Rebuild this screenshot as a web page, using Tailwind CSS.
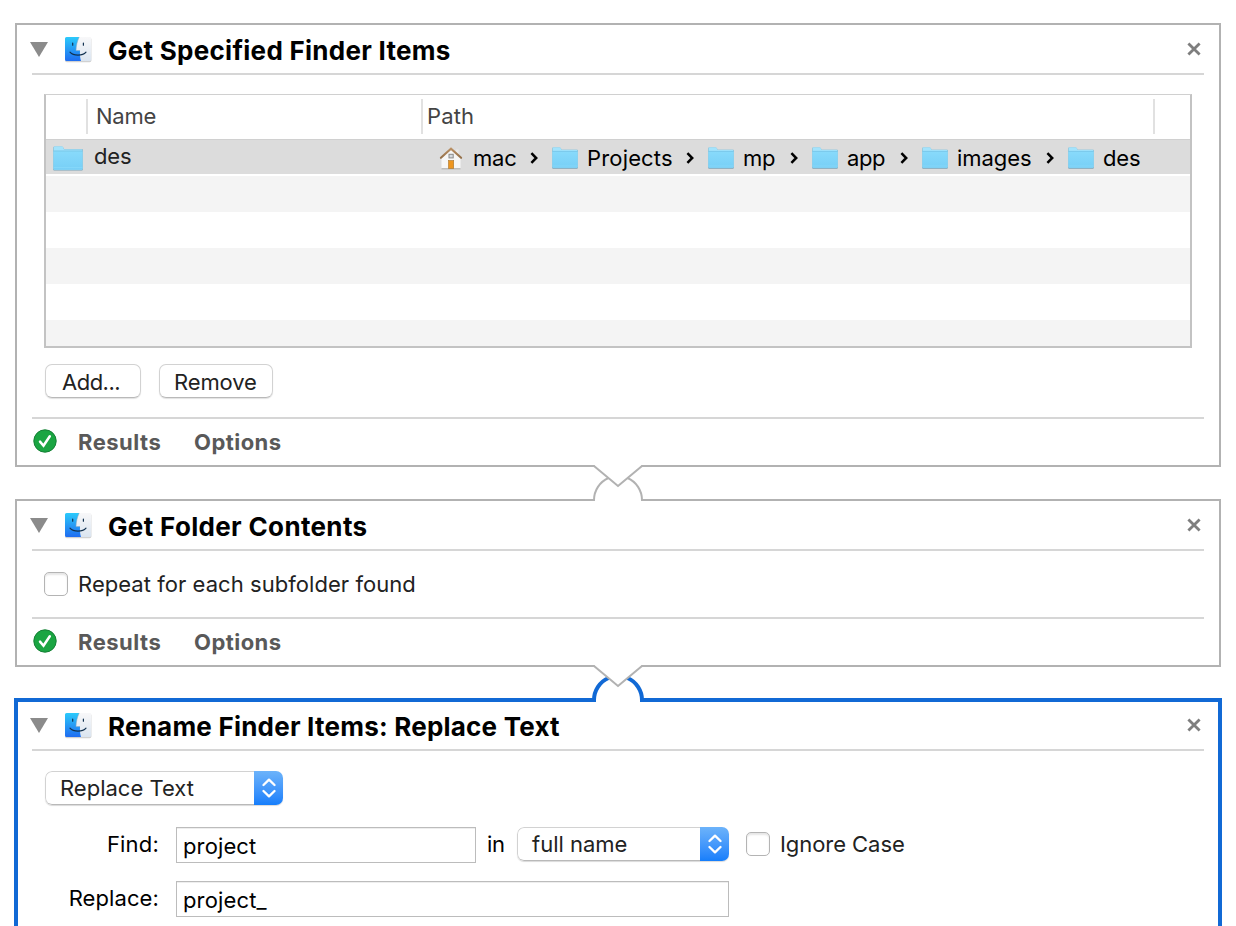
<!DOCTYPE html>
<html lang="en">
<head>
<meta charset="utf-8">
<title>Workflow</title>
<script src="https://cdn.jsdelivr.net/npm/@tailwindcss/browser@4"></script>
</head>
<body class="w-[1236px] h-[926px] overflow-hidden bg-white text-[22px] leading-[26px] text-[#222] font-['Inter','Liberation_Sans',sans-serif] whitespace-nowrap">
<svg width="0" height="0" class="absolute">
  <defs>
    <linearGradient id="fb" x1="0" y1="0" x2="0" y2="1"><stop offset="0" stop-color="#2bcafb"/><stop offset="1" stop-color="#1f6df0"/></linearGradient>
    <linearGradient id="fw" x1="0" y1="0" x2="0" y2="1"><stop offset="0" stop-color="#f8f8f9"/><stop offset="1" stop-color="#dbe5f0"/></linearGradient>
    <linearGradient id="fo" x1="0" y1="0" x2="0" y2="1"><stop offset="0" stop-color="#88dafb"/><stop offset="1" stop-color="#77cff6"/></linearGradient>
    <linearGradient id="roof" x1="0" y1="0" x2="0" y2="1"><stop offset="0" stop-color="#b98f63"/><stop offset="1" stop-color="#94704a"/></linearGradient>
  </defs>
  <symbol id="finder" viewBox="0 0 28 27">
    <rect x="1" y="1.6" width="26.4" height="24.600" rx="1.8" fill="#000" opacity=".18"/>
    <rect x="1" y="1" width="26.200" height="24" rx="1.6" fill="url(#fw)"/>
    <path d="M2.6 1H15.2C13.2 5.4 12.2 9.6 12 14.6H16C15.8 18 16 21.8 17 25H2.6A1.6 1.6 0 0 1 1 23.400V2.6A1.6 1.6 0 0 1 2.600 1Z" fill="url(#fb)"/>
    <path d="M15.200 1C13.200 5.400 12.200 9.600 12 14.600H16" fill="none" stroke="#8da9bd" stroke-width=".5"/>
    <path d="M8.700 7V9.200M19.400 7V9.200" stroke="#123250" stroke-width="1.200" stroke-linecap="round"/>
    <path d="M6 16.200C9.500 20.200 18.500 20.200 22 16.200" fill="none" stroke="#123250" stroke-width="1.200" stroke-linecap="round"/>
  </symbol>
  <symbol id="folder" viewBox="0 0 30 25" preserveAspectRatio="none">
    <path d="M0.200 2Q.2.500 1.500.500H8.500Q9.600.500 10.200 1.500L11 3H29Q29.800 3 29.800 4V23.500Q29.800 24.600 28.800 24.600H1.200Q.2 24.600.2 23.500Z" fill="#5f95af" opacity=".8"/>
    <path d="M0.500 1.800Q.5.300 1.700.300H8.500Q9.600.300 10.200 1.300L11 3.200H28.700Q29.500 3.200 29.500 4V22.800Q29.500 23.700 28.600 23.700H1.400Q.5 23.700.5 22.800Z" fill="#a3e3fc"/>
    <path d="M.5 5.200H29.500V22.800Q29.500 23.700 28.600 23.700H1.400Q.5 23.700.5 22.800Z" fill="url(#fo)"/>
    <path d="M.5 5H29.500" stroke="#6dc0e4" stroke-width=".8"/>
    <path d="M.6 21.600H29.400" stroke="#8ddbfa" stroke-width=".7"/>
  </symbol>
  <symbol id="home" viewBox="0 0 24 24">
    <path d="M16.800 3.500H19.600V8H16.800Z" fill="#e9e9e9"/>
    <path d="M2.500 11L12 2.800L21.500 11V22.600H2.500Z" fill="#f7f7f7"/>
    <path d="M2.500 22.800H21.500" stroke="#aaa" stroke-width="1"/>
    <path d="M1.900 11.800L12 2.600L22.100 11.800" fill="none" stroke="url(#roof)" stroke-width="2.100" stroke-linecap="round"/>
    <rect x="10" y="8.300" width="4.200" height="3.600" fill="#d5dbe0" stroke="#8c8b89" stroke-width="1"/>
    <rect x="9.500" y="14.500" width="5.200" height="8" fill="#ee961f" stroke="#a9762d" stroke-width=".6"/>
  </symbol>
  <symbol id="chev" viewBox="0 0 8 12"><path d="M1.400 1.200L6.200 6L1.400 10.800" fill="none" stroke="#000" stroke-width="2.500"/></symbol>
  <symbol id="tri" viewBox="0 0 18 15"><path d="M0 0H18L9 15Z" fill="#8b8b8b"/></symbol>
  <symbol id="close" viewBox="0 0 14 14"><path d="M1.400 1.400L12.600 12.600M12.600 1.400L1.400 12.600" stroke="#7e7e7e" stroke-width="2.800"/></symbol>
  <symbol id="ok" viewBox="0 0 24 24"><circle cx="12" cy="12" r="11.200" fill="#1aa542" stroke="#168036" stroke-width="1"/><path d="M7 12.600L10.500 16.700L16.800 7.200" fill="none" stroke="#fff" stroke-width="2.500" stroke-linecap="round"/></symbol>
  <symbol id="updown" viewBox="0 0 14 20"><path d="M1.500 7L7 1.700L12.500 7M1.500 13L7 18.300L12.500 13" fill="none" stroke="#fff" stroke-width="2.300" stroke-linecap="round" stroke-linejoin="round"/></symbol>
</svg>

<main class="relative pt-[23px]">
  <!-- Get Specified Finder Items -->
  <section class="ml-[15px] w-[1206px] h-[444px] border-2 border-[#b2b2b2] px-[15px]">
    <header class="h-[50px] border-b-2 border-[#d6d6d6] flex items-center pr-[3px] pt-[3px]">
      <svg class="w-[18px] h-[15px] -ml-[2px] -mt-[3px]"><use href="#tri"/></svg>
      <svg class="w-7 h-[27px] ml-4 -mt-[2px]"><use href="#finder"/></svg>
      <h2 class="ml-4 text-[26px] leading-8 font-bold text-black tracking-[0.28px]">Get Specified Finder Items</h2>
      <svg class="w-[14px] h-[14px] ml-auto -mt-[3px]"><use href="#close"/></svg>
    </header>
    <div class="mt-[19px] ml-3 w-[1148px] h-[254px] border-2 border-t border-[#c3c3c3] border-t-[#d0d0d0] bg-white flex flex-col">
      <div class="h-[44px] shrink-0 flex pt-1 text-[#444]">
        <div class="w-[42px] h-[35px] border-r-2 border-[#e1e1e1]"></div>
        <div class="w-[335px] h-[35px] border-r-2 border-[#e1e1e1] pl-2 pt-1 tracking-[-0.25px]">Name</div>
        <div class="w-[732px] h-[35px] border-r-2 border-[#e1e1e1] pl-1 pt-1 tracking-[0.13px]">Path</div>
      </div>
      <div class="h-[35px] shrink-0 bg-[#dcdcdc] border-t border-[#d0d0d0] flex text-black">
        <svg class="w-[30px] h-[25px] ml-[7px] mt-[6px] shrink-0"><use href="#folder"/></svg>
        <span class="w-[357px] pl-[11px] mt-[3px] text-[#222] tracking-[-0.1px] shrink-0">des</span>
        <div class="flex items-center h-[34px]">
          <div class="w-[112px] flex items-center pt-px"><svg class="w-6 h-6 -ml-px"><use href="#home"/></svg><span class="ml-[10px] tracking-[-0.2px]">mac</span><svg class="w-2 h-3 ml-auto mr-[14px]"><use href="#chev"/></svg></div>
          <div class="w-[156px] flex items-center pt-px"><svg class="w-[26px] h-[22px]"><use href="#folder"/></svg><span class="ml-[9px] tracking-[0.16px]">Projects</span><svg class="w-2 h-3 ml-auto mr-[14px]"><use href="#chev"/></svg></div>
          <div class="w-[104px] flex items-center pt-px"><svg class="w-[26px] h-[22px]"><use href="#folder"/></svg><span class="ml-[9px] tracking-[-0.2px]">mp</span><svg class="w-2 h-3 ml-auto mr-[14px]"><use href="#chev"/></svg></div>
          <div class="w-[110px] flex items-center pt-px"><svg class="w-[26px] h-[22px]"><use href="#folder"/></svg><span class="ml-[9px] tracking-[-0.4px]">app</span><svg class="w-2 h-3 ml-auto mr-[14px]"><use href="#chev"/></svg></div>
          <div class="w-[146px] flex items-center pt-px"><svg class="w-[26px] h-[22px]"><use href="#folder"/></svg><span class="ml-[9px] -tracking-[0.05px]">images</span><svg class="w-2 h-3 ml-auto mr-[14px]"><use href="#chev"/></svg></div>
          <div class="flex items-center pt-px"><svg class="w-[26px] h-[22px]"><use href="#folder"/></svg><span class="ml-[9px] tracking-[-0.1px]">des</span></div>
        </div>
      </div>
      <div class="h-[36px] shrink-0 mt-[2px] bg-[#f4f4f4]"></div>
      <div class="h-[36px] shrink-0 mt-[36px] bg-[#f4f4f4]"></div>
      <div class="grow mt-[36px] bg-[#f4f4f4]"></div>
    </div>
    <div class="mt-4 ml-[13px] flex gap-[18px]">
      <button class="w-24 h-[34px] rounded-[7px] border border-[#d2d2d2] border-b-[#b9b9b9] shadow-[0_1px_1px_rgba(0,0,0,0.12)] flex items-center pl-4 pt-[2px] tracking-[-0.5px]">Add...</button>
      <button class="w-[114px] h-[34px] rounded-[7px] border border-[#d2d2d2] border-b-[#b9b9b9] shadow-[0_1px_1px_rgba(0,0,0,0.12)] flex items-center pl-[14px] pt-[2px] tracking-[-0.12px]">Remove</button>
    </div>
    <footer class="mt-[19px] h-[48px] border-t-2 border-[#d6d6d6] flex items-center text-[#595959] font-bold">
      <svg class="w-6 h-6 ml-px -mt-[2px]"><use href="#ok"/></svg>
      <span class="w-[116px] ml-[21px] tracking-[0.5px]">Results</span><span class="tracking-[0.45px]">Options</span>
    </footer>
  </section>

  <!-- Get Folder Contents -->
  <section class="mt-8 ml-[15px] w-[1206px] h-[168px] border-2 border-[#b2b2b2] px-[15px]">
    <header class="h-[50px] border-b-2 border-[#d6d6d6] flex items-center pr-[3px] pt-[3px]">
      <svg class="w-[18px] h-[15px] -ml-[2px] -mt-[3px]"><use href="#tri"/></svg>
      <svg class="w-7 h-[27px] ml-4 -mt-[2px]"><use href="#finder"/></svg>
      <h2 class="ml-4 text-[26px] leading-8 font-bold text-black tracking-[0.34px]">Get Folder Contents</h2>
      <svg class="w-[14px] h-[14px] ml-auto -mt-[3px]"><use href="#close"/></svg>
    </header>
    <label class="h-[66px] flex items-center ml-3"><span class="w-6 h-6 rounded-[5px] border-[1.5px] border-[#b4b4b4] shadow-[inset_0_2px_2px_rgba(0,0,0,0.10)]"></span><span class="ml-[10px] tracking-[0.05px]">Repeat for each subfolder found</span></label>
    <footer class="h-[48px] border-t-2 border-[#d6d6d6] flex items-center text-[#595959] font-bold">
      <svg class="w-6 h-6 ml-px -mt-[2px]"><use href="#ok"/></svg>
      <span class="w-[116px] ml-[21px] tracking-[0.5px]">Results</span><span class="tracking-[0.45px]">Options</span>
    </footer>
  </section>

  <!-- Rename Finder Items -->
  <section class="mt-[31px] ml-[14px] w-[1208px] h-[260px] border-4 border-[#1169d5] px-[14px]">
    <header class="h-[49px] border-b-2 border-[#d6d6d6] flex items-center pr-[3px] pt-[2px]">
      <svg class="w-[18px] h-[15px] -ml-[2px] -mt-[3px]"><use href="#tri"/></svg>
      <svg class="w-7 h-[27px] ml-4 -mt-[2px]"><use href="#finder"/></svg>
      <h2 class="ml-4 text-[26px] leading-8 font-bold text-black tracking-[0.22px]">Rename Finder Items: Replace Text</h2>
      <svg class="w-[14px] h-[14px] ml-auto -mt-[3px]"><use href="#close"/></svg>
    </header>
    <div class="mt-5 ml-[13px] w-[238px] h-[34px] flex rounded-[7px] overflow-hidden shadow-[0_1px_1px_rgba(0,0,0,0.15)]">
      <span class="grow rounded-l-[7px] border border-r-0 border-[#d2d2d2] border-b-[#b9b9b9] pl-[14px] pt-[3px]">Replace Text</span>
      <span class="w-[29px] bg-linear-to-b from-[#6cb3fa] to-[#157efb] flex items-center justify-center"><svg class="w-[14px] h-5"><use href="#updown"/></svg></span>
    </div>
    <div class="mt-[22px] flex text-black">
      <span class="w-[127px] text-right pt-1 tracking-[0.2px]">Find:</span>
      <div class="ml-[17px] w-[300px] h-9 border border-[#bcbcbc] shadow-[inset_0_1px_0_#eee] pl-[6px] pt-[5px] tracking-[0.12px]">project</div>
      <span class="ml-[11px] w-[30px] pt-1 tracking-[-0.3px]">in</span>
      <div class="w-[212px] h-[34px] flex rounded-[7px] overflow-hidden shadow-[0_1px_1px_rgba(0,0,0,0.15)] text-[#222]">
        <span class="grow rounded-l-[7px] border border-r-0 border-[#d2d2d2] border-b-[#b9b9b9] pl-[14px] pt-[3px]">full name</span>
        <span class="w-[29px] bg-linear-to-b from-[#6cb3fa] to-[#157efb] flex items-center justify-center"><svg class="w-[14px] h-5"><use href="#updown"/></svg></span>
      </div>
      <label class="h-[34px] flex items-center ml-[17px] text-[#222]"><span class="w-6 h-6 rounded-[5px] border-[1.5px] border-[#b4b4b4] shadow-[inset_0_2px_2px_rgba(0,0,0,0.10)]"></span><span class="ml-[10px] tracking-[-0.06px]">Ignore Case</span></label>
    </div>
    <div class="mt-[18px] flex text-black">
      <span class="w-[127px] text-right pt-1 tracking-[0.1px]">Replace:</span>
      <div class="ml-[17px] w-[553px] h-9 border border-[#bcbcbc] shadow-[inset_0_1px_0_#eee] pl-[6px] pt-[5px] tracking-[0.14px]">project_</div>
    </div>
  </section>

  <!-- Connectors drawn across the card borders -->
  <svg class="absolute left-[588px] top-[460px]" width="60" height="44" fill="none" stroke="#b2b2b2" stroke-width="2">
    <path d="M6.500 4H53.500V8H6.500ZM7 38H53V42H7Z" fill="#fff" stroke="none"/>
    <path d="M6 41V40A24 24 0 0 1 20.500 18M54 41V40A24 24 0 0 0 39.500 18"/>
    <path d="M5 6H6L30 26L54 6H55"/>
  </svg>
  <svg class="absolute left-[588px] top-[660px]" width="60" height="44" fill="none" stroke="#b2b2b2" stroke-width="2">
    <path d="M6.500 4H53.500V8H6.500ZM8 37H52V43H8Z" fill="#fff" stroke="none"/>
    <path d="M6 42V40A24 24 0 0 1 20.500 18M54 42V40A24 24 0 0 0 39.500 18" stroke="#1169d5" stroke-width="4"/>
    <path d="M6 6H54L30 26Z" fill="#fff" stroke="none"/>
    <path d="M5 6H6L30 26L54 6H55"/>
  </svg>
</main>
</body>
</html>
